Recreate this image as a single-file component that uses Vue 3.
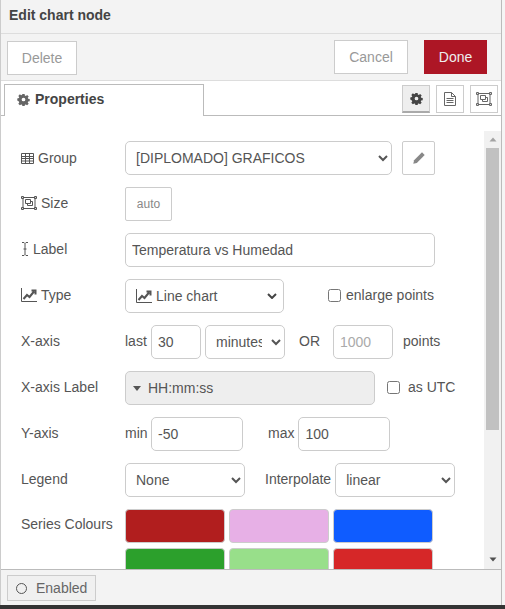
<template>
  <div class="window">
    <div class="tray">
      <div class="tray-title">Edit chart node</div>
      <div class="tray-actions">
        <button class="btn btn-delete">Delete</button>
        <div class="actions-right">
          <button class="btn">Cancel</button>
          <button class="btn btn-done">Done</button>
        </div>
      </div>

      <div class="tabs">
        <div class="tab">
          <svg class="ico" viewBox="0 0 14 14"><path fill="#666" fill-rule="evenodd" :d="gearPath" /></svg>
          Properties
        </div>
        <div class="tab-btns">
          <button class="tab-btn is-active">
            <svg class="ico" viewBox="0 0 14 14"><path fill="#444" fill-rule="evenodd" :d="gearPath" /></svg>
          </button>
          <button class="tab-btn">
            <svg class="ico-doc" viewBox="0 0 12 14" fill="none" stroke="#666"><path d="M.5.5h7l4 4v9H.5z" /><path d="M7.500.5v4h4M2.500 6.500h7M2.500 8.500h7M2.500 10.500h7" /></svg>
          </button>
          <button class="tab-btn">
            <svg class="ico-size" viewBox="0 0 16 14" fill="none" stroke="#666"><path :d="sizePath" /></svg>
          </button>
        </div>
      </div>

      <div class="content">
        <div class="form">
          <div class="row">
            <label class="lbl lbl-group">
              <svg class="ico-table" viewBox="0 0 13 11" fill="none" stroke="#555"><path d="M.5.5h12v10H.5zM.5 3.500h12M.5 5.500h12M.5 8h12M4.500 .5v10M8.500 .5v10" /></svg>
              Group
            </label>
            <select class="field w-group"><option>[DIPLOMADO] GRAFICOS</option></select>
            <button class="icon-btn">
              <svg class="ico-pencil" viewBox="0 0 12 12"><path fill="#888" d="M9 .3l2.700 2.700-7.900 7.900-3.500.8.800-3.500z" /></svg>
            </button>
          </div>

          <div class="row">
            <label class="lbl">
              <svg class="ico-size ico-after" viewBox="0 0 16 14" fill="none" stroke="#555"><path :d="sizePath" /></svg>
              Size
            </label>
            <button class="size-btn">auto</button>
          </div>

          <div class="row">
            <label class="lbl">
              <svg class="ico-cursor" viewBox="0 0 8 14" fill="none" stroke="#555"><path d="M1 .5h2l1 1 1-1h2M4 1.500v11M1 13.500h2l1-1 1 1h2M2.500 7h3" /></svg>
              Label
            </label>
            <input class="field w-label" value="Temperatura vs Humedad" />
          </div>

          <div class="row">
            <label class="lbl">
              <svg class="ico-size ico-after" viewBox="0 0 16 14" fill="none" stroke="#555"><path :d="chartAxis" /><path stroke-width="2" :d="chartLine" /></svg>
              Type
            </label>
            <div class="field fake-select w-type">
              <svg class="ico-size ico-after" viewBox="0 0 16 14" fill="none" stroke="#555"><path :d="chartAxis" /><path stroke-width="2" :d="chartLine" /></svg>
              <span>Line chart</span>
              <svg class="chevron" viewBox="0 0 10 6"><path d="M1 1l4 4 4-4" fill="none" stroke="#444" stroke-width="2" /></svg>
            </div>
            <label class="check enlarge"><input type="checkbox" />enlarge points</label>
          </div>

          <div class="row">
            <label class="lbl">X-axis</label>
            <span class="unit">last</span>
            <input class="field w-last" value="30" />
            <select class="field w-units"><option>minutes</option></select>
            <span class="or">OR</span>
            <input class="field w-points" placeholder="1000" />
            <span class="points">points</span>
          </div>

          <div class="row">
            <label class="lbl">X-axis Label</label>
            <div class="field typed w-typed">
              <span class="caret"></span>
              HH:mm:ss
            </div>
            <label class="check utc"><input type="checkbox" />as UTC</label>
          </div>

          <div class="row">
            <label class="lbl">Y-axis</label>
            <span class="unit">min</span>
            <input class="field w-min" value="-50" />
            <span class="max">max</span>
            <input class="field w-max" value="100" />
          </div>

          <div class="row">
            <label class="lbl">Legend</label>
            <select class="field w-legend"><option>None</option></select>
            <span class="interp">Interpolate</span>
            <select class="field w-interp"><option>linear</option></select>
          </div>

          <div class="row row-top">
            <label class="lbl lbl-series">Series Colours</label>
            <div class="swatches">
              <span v-for="c in colours" :key="c" class="swatch" :style="{ background: c }"></span>
            </div>
          </div>
        </div>

        <div class="scrollbar">
          <svg class="arrow" viewBox="0 0 8 5"><path d="M4 .5l3.500 4h-7z" fill="#a3a3a3" /></svg>
          <div class="track"><div class="thumb"></div></div>
          <svg class="arrow arrow-down" viewBox="0 0 8 5"><path d="M4 4.500L.5.500h7z" fill="#505050" /></svg>
        </div>
      </div>

      <div class="footer">
        <button class="enabled"><span class="ring"></span>Enabled</button>
      </div>
    </div>
    <div class="edge"></div>
  </div>
</template>

<script setup>
const colours = ['#b11e1e', '#e7b0e6', '#0f5cff', '#2ca02c', '#98df8a', '#d62728']

const gearPath = 'M5.800 1h2.400l.3 1.700 1 .4 1.400-1 1.700 1.700-1 1.400.4 1 1.700.3v2.400l-1.700.3-.4 1 1 1.400-1.700 1.700-1.400-1-1 .4-.3 1.700H5.800l-.3-1.700-1-.4-1.400 1-1.700-1.700 1-1.400-.4-1L.3 8.200V5.800L2 5.500l.4-1-1-1.400 1.700-1.700 1.400 1 1-.4zM7 5a2 2 0 100 4 2 2 0 000-4z'
const sizePath = 'M2 1.500h12v11H2zM.5.500h2v2h-2zM13.500.500h2v2h-2zM.5 11.500h2v2h-2zM13.500 11.500h2v2h-2zM4.500 3.500h5v4h-5zM6.500 7.500v2h5v-4h-2'
const chartAxis = 'M.5 0v13.500h15.500'
const chartLine = 'M2.500 11l3.500-4 2.500 2 4.500-5.500M10.500 2.500h4v4'
</script>

<style>
html,
body {
  margin: 0;
  background: #f5f5f5;
}
</style>

<style scoped>
.window {
  display: flex;
  flex-direction: column;
  height: 609px;
  overflow: hidden;
}

.tray {
  display: flex;
  flex-direction: column;
  width: 500px;
  height: 605px;
  flex: none;
  border-left: 1px solid #ccc;
  border-right: 1px solid #bbb;
  font-family: "Liberation Sans", Arial, sans-serif;
  font-size: 14px;
  color: #555;
  background: #fff;
}

.edge {
  flex: 1;
  background: #333;
}

.tray-title {
  height: 26px;
  padding: 7px 0 0 8px;
  font-weight: bold;
  color: #444;
  background: #f3f3f3;
  border-bottom: 1px solid #ddd;
}

.tray-actions {
  display: flex;
  justify-content: space-between;
  height: 46px;
  padding: 0 14px 0 6px;
  background: #f3f3f3;
  border-bottom: 1px solid #ddd;
}

.actions-right {
  display: flex;
  gap: 16px;
  padding-top: 6px;
}

.btn {
  box-sizing: border-box;
  height: 34px;
  padding: 0;
  font: 14px "Liberation Sans", Arial, sans-serif;
  color: #999;
  background: #fff;
  border: 1px solid #ccc;
  width: 74px;
}

.btn-delete {
  width: 70px;
  margin-top: 7px;
}

.btn-done {
  width: 63px;
  color: #eee;
  background: #ad1625;
  border-color: #ad1625;
}

.tabs {
  display: flex;
  justify-content: space-between;
  align-items: flex-start;
  height: 35px;
  flex: none;
  box-sizing: border-box;
  padding: 3px 3px 0;
  border-bottom: 1px solid #bbb;
}

.tab {
  display: flex;
  align-items: center;
  gap: 5px;
  box-sizing: border-box;
  width: 200px;
  height: 32px;
  padding: 0 0 3px 12px;
  font-weight: bold;
  color: #444;
  background: #fff;
  border: 1px solid #bbb;
  border-bottom: 0;
}

.tab-btns {
  display: flex;
  gap: 6px;
  padding-top: 1px;
}

.tab-btn {
  display: flex;
  align-items: center;
  justify-content: center;
  box-sizing: border-box;
  width: 28px;
  height: 28px;
  padding: 0;
  background: #fff;
  border: 1px solid #ccc;
}

.tab-btn.is-active {
  background: #eee;
  border-bottom: 2px solid #aaa;
}

.ico {
  width: 13px;
  height: 13px;
  flex: none;
}

.ico-doc {
  width: 12px;
  height: 14px;
  flex: none;
}

.ico-size {
  width: 16px;
  height: 14px;
  flex: none;
}

.ico-after {
  margin-right: 4px;
}

.ico-table {
  width: 13px;
  height: 11px;
  margin-right: 4px;
  flex: none;
}

.ico-pencil {
  width: 12px;
  height: 12px;
}

.ico-cursor {
  width: 8px;
  height: 14px;
  margin-right: 4px;
  flex: none;
}

.content {
  flex: 1;
  display: flex;
  min-height: 0;
  overflow: hidden;
}

.form {
  flex: 1;
  padding: 25px 0 0 20px;
  min-width: 0;
}

.row {
  display: flex;
  align-items: center;
  height: 34px;
  margin-bottom: 12px;
  white-space: nowrap;
}

.row-top {
  align-items: flex-start;
}

.lbl {
  display: flex;
  align-items: center;
  width: 104px;
  flex: none;
  padding-bottom: 2px;
  color: #555;
}

.lbl-group {
  padding-bottom: 0;
}

.lbl-series {
  padding-top: 7px;
}

.field {
  box-sizing: border-box;
  height: 34px;
  padding: 0 6px;
  font: 14px "Liberation Sans", Arial, sans-serif;
  color: #555;
  background: #fff;
  border: 1px solid #ccc;
  border-radius: 5px;
  outline: none;
}

input.field::placeholder {
  color: #aaa;
}

.w-group { width: 267px; }
.w-label { width: 310px; }
.w-last { width: 50px; }
.w-units { width: 80px; margin-left: 4px; }
.w-points { width: 60px; }
.w-min { width: 92px; }
.w-max { width: 92px; }
.w-legend { width: 120px; }
.w-interp { width: 120px; }

.icon-btn {
  display: flex;
  align-items: center;
  justify-content: center;
  box-sizing: border-box;
  width: 33px;
  height: 34px;
  margin-left: 10px;
  padding: 0;
  background: #fff;
  border: 1px solid #ccc;
  border-radius: 2px;
}

.size-btn {
  box-sizing: border-box;
  width: 47px;
  height: 34px;
  padding: 0;
  font: 12px "Liberation Sans", Arial, sans-serif;
  color: #888;
  background: #fff;
  border: 1px solid #ccc;
  border-radius: 2px;
}

.fake-select {
  display: flex;
  align-items: center;
  padding: 0 0 0 10px;
}

.w-type {
  width: 159px;
}

.chevron {
  width: 10px;
  height: 6px;
  margin-left: auto;
  margin-right: 6px;
}

.check {
  display: flex;
  align-items: center;
  padding-bottom: 2px;
}

.check input {
  width: 13px;
  height: 13px;
  margin: 0 5px 0 0;
}

.enlarge {
  margin-left: 44px;
}

.utc {
  margin-left: 12px;
}

.utc input {
  margin-right: 8px;
}

.unit {
  width: 26px;
  padding-bottom: 2px;
}

.or {
  margin: 0 13px 0 14px;
  padding-bottom: 2px;
}

.points {
  margin-left: 10px;
  padding-bottom: 2px;
}

.max {
  margin: 0 4px 0 25px;
  padding-bottom: 2px;
}

.interp {
  margin: 0 4px 0 20px;
  padding-bottom: 2px;
}

.typed {
  display: flex;
  align-items: center;
  width: 250px;
  padding: 0 0 0 7px;
  background: #eee;
  color: #555;
}

.caret {
  width: 0;
  height: 0;
  margin-right: 7px;
  border-top: 5px solid #555;
  border-left: 4px solid transparent;
  border-right: 4px solid transparent;
}

.swatches {
  display: grid;
  grid-template-columns: repeat(3, 100px);
  grid-auto-rows: 34px;
  gap: 5px 4px;
}

.swatch {
  box-sizing: border-box;
  border: 1px solid #ccc;
  border-radius: 4px;
}

.scrollbar {
  display: flex;
  flex-direction: column;
  align-items: center;
  width: 17px;
  flex: none;
  padding-top: 21px;
  background: linear-gradient(#fff 0 15px, #f1f1f1 15px);
}

.arrow {
  width: 8px;
  height: 5px;
  margin-bottom: 6px;
  flex: none;
}

.arrow-down {
  margin: 0 0 7px;
}

.track {
  flex: 1;
  width: 100%;
  padding: 0 2px;
  box-sizing: border-box;
}

.thumb {
  height: 282px;
  background: #c1c1c1;
}

.footer {
  height: 35px;
  flex: none;
  background: #f3f3f3;
  border-top: 1px solid #bbb;
}

.enabled {
  display: flex;
  align-items: center;
  gap: 9px;
  box-sizing: border-box;
  width: 89px;
  height: 26px;
  margin: 5px 0 0 6px;
  padding: 0 0 0 8px;
  font: 14px "Liberation Sans", Arial, sans-serif;
  color: #666;
  background: #f0f0f0;
  border: 1px solid #ccc;
}

.ring {
  box-sizing: border-box;
  width: 11px;
  height: 11px;
  border: 1px solid #555;
  border-radius: 50%;
}
</style>
